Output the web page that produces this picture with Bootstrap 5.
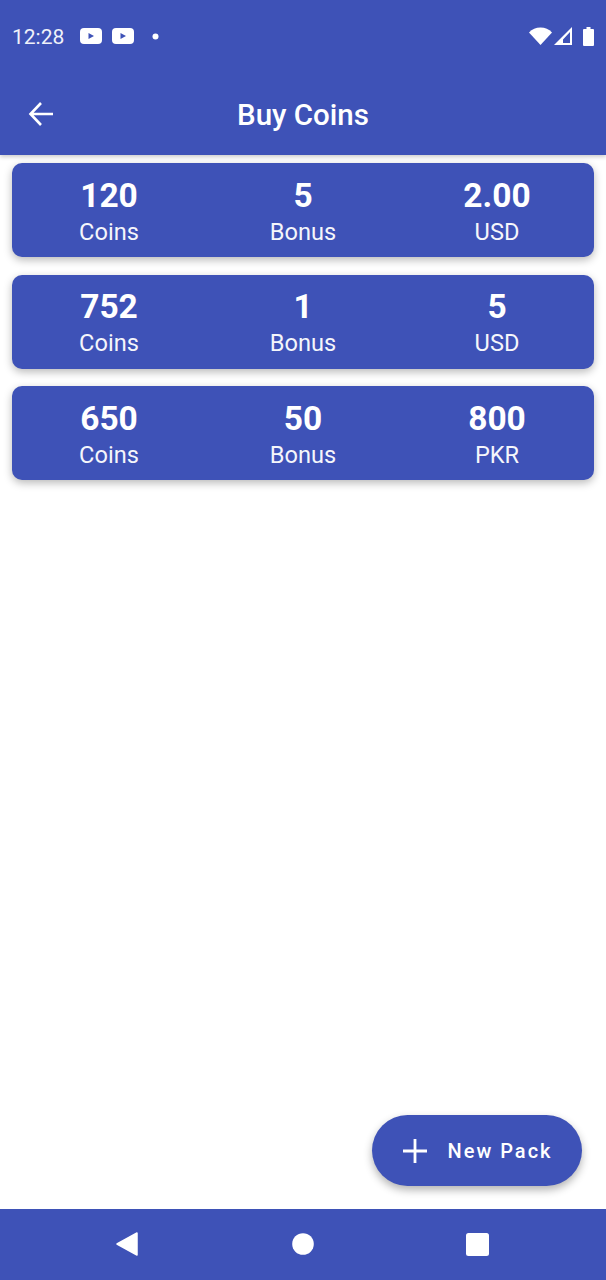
<!DOCTYPE html>
<html lang="en">
<head>
  <meta charset="UTF-8">
  <meta name="viewport" content="width=device-width, initial-scale=1.0">
  <title>Buy Coins</title>
  <link href="https://cdn.jsdelivr.net/npm/bootstrap@5.3.0/dist/css/bootstrap.min.css" rel="stylesheet">
  <script src="https://cdn.jsdelivr.net/npm/bootstrap@5.3.0/dist/js/bootstrap.bundle.min.js"></script>
  <style>
    body {
      background-color: #fff;
      font-family: Roboto, sans-serif;
      color: #fff;
    }
    .app-page {
      height: 1280px;
    }
    .app-bar {
      height: 155px;
      background-color: #3e52b7;
      box-shadow: 0 2px 4px rgba(0, 0, 0, 0.2);
    }
    .status-row {
      height: 72px;
      padding: 0 12px;
    }
    .status-time {
      font-size: 21px;
      width: 68px;
      opacity: 0.92;
      padding-top: 4px;
    }
    .yt-gap {
      margin-right: 10px;
    }
    .dot-gap {
      margin-left: 18px;
    }
    .signal-gap {
      margin-left: 2px;
      margin-right: 11px;
    }
    .tool-row {
      height: 83px;
      padding-top: 3px;
    }
    .back-btn {
      left: 28px;
      top: 29px;
    }
    .page-title {
      font-size: 29.5px;
      font-weight: 500;
    }
    .pack-list {
      padding: 8px 12px 0;
      gap: 17.5px;
    }
    .pack-card {
      height: 94px;
      padding-top: 2px;
      background-color: #3e52b7;
      border-radius: 10px;
      box-shadow: 0 3px 8px rgba(0, 0, 0, 0.28);
    }
    .pack-num {
      font-size: 33.5px;
      font-weight: 700;
      line-height: 42px;
    }
    .pack-label {
      font-size: 23.6px;
      font-weight: 400;
      line-height: 31px;
      opacity: 0.95;
    }
    .fab-row {
      padding-right: 24px;
      margin-bottom: 23px;
    }
    .new-pack {
      width: 210px;
      height: 71px;
      padding-left: 14px;
      border-radius: 36px;
      background-color: #3e52b7;
      box-shadow: 0 4px 8px rgba(0, 0, 0, 0.3);
      color: #fff;
      font-size: 20px;
      font-weight: 500;
      letter-spacing: 2px;
      gap: 20px;
    }
    .bottom-bar {
      height: 71px;
      background-color: #3e52b7;
      padding-bottom: 1px;
    }
    .nav-slot {
      width: 176px;
    }
    .nav-square {
      margin-right: 3px;
    }
  </style>
</head>
<body>
  <div class="app-page d-flex flex-column">
    <header class="app-bar">
      <div class="status-row d-flex align-items-center">
        <span class="status-time">12:28</span>
        <svg width="22" height="16" viewBox="0 0 22 16" class="yt-gap"><rect width="22" height="16" rx="4" fill="#fff"/><path d="M8.500 5l5.500 3-5.500 3z" fill="#3e52b7"/></svg>
        <svg width="22" height="16" viewBox="0 0 22 16"><rect width="22" height="16" rx="4" fill="#fff"/><path d="M8.500 5l5.500 3-5.500 3z" fill="#3e52b7"/></svg>
        <svg width="7" height="7" viewBox="0 0 7 7" class="dot-gap"><circle cx="3.500" cy="3.500" r="3" fill="#fff"/></svg>
        <span class="flex-grow-1"></span>
        <svg width="23" height="18" viewBox="0 0 23 18"><path d="M0 5.500C3 2 7 .5 11.500.5S20 2 23 5.500L11.500 18z" fill="#fff"/></svg>
        <svg width="18" height="18" viewBox="0 0 18 18" class="signal-gap"><path d="M18 0v18H0zM16 5v11H9v-3.500z" fill="#fff" fill-rule="evenodd"/></svg>
        <svg width="11" height="19" viewBox="0 0 11 19"><path d="M3.500 0h4v2h2.500a1 1 0 0 1 1 1v15a1 1 0 0 1-1 1H1a1 1 0 0 1-1-1V3a1 1 0 0 1 1-1h2.500z" fill="#fff"/></svg>
      </div>
      <div class="tool-row position-relative d-flex align-items-center justify-content-center">
        <svg class="back-btn position-absolute" width="26" height="26" viewBox="0 0 26 26"><path d="M13 2L2.500 13 13 24M2.500 13H25" fill="none" stroke="#fff" stroke-width="2.600"/></svg>
        <span class="page-title">Buy Coins</span>
      </div>
    </header>

    <main class="pack-list d-flex flex-column flex-grow-1">
      <div class="pack-card row g-0 align-items-center text-center">
        <div class="col-4"><div class="pack-num">120</div><div class="pack-label">Coins</div></div>
        <div class="col-4"><div class="pack-num">5</div><div class="pack-label">Bonus</div></div>
        <div class="col-4"><div class="pack-num">2.00</div><div class="pack-label">USD</div></div>
      </div>
      <div class="pack-card row g-0 align-items-center text-center">
        <div class="col-4"><div class="pack-num">752</div><div class="pack-label">Coins</div></div>
        <div class="col-4"><div class="pack-num">1</div><div class="pack-label">Bonus</div></div>
        <div class="col-4"><div class="pack-num">5</div><div class="pack-label">USD</div></div>
      </div>
      <div class="pack-card row g-0 align-items-center text-center">
        <div class="col-4"><div class="pack-num">650</div><div class="pack-label">Coins</div></div>
        <div class="col-4"><div class="pack-num">50</div><div class="pack-label">Bonus</div></div>
        <div class="col-4"><div class="pack-num">800</div><div class="pack-label">PKR</div></div>
      </div>
    </main>

    <div class="fab-row d-flex justify-content-end">
      <button type="button" class="new-pack btn d-flex align-items-center justify-content-center border-0">
        <svg width="24" height="24" viewBox="0 0 24 24"><path d="M12 0v24M0 12h24" fill="none" stroke="#fff" stroke-width="2.800"/></svg>
        New Pack
      </button>
    </div>

    <footer class="bottom-bar d-flex align-items-center justify-content-center">
      <div class="nav-slot d-flex justify-content-center">
        <svg width="22" height="24" viewBox="0 0 22 24"><path d="M21 1v22L1 12z" fill="#fff" stroke="#fff" stroke-width="1.500" stroke-linejoin="round"/></svg>
      </div>
      <div class="nav-slot d-flex justify-content-center">
        <svg width="22" height="22" viewBox="0 0 22 22"><circle cx="11" cy="11" r="10.800" fill="#fff"/></svg>
      </div>
      <div class="nav-slot d-flex justify-content-center">
        <svg width="23" height="23" viewBox="0 0 23 23" class="nav-square"><rect width="23" height="23" rx="2.500" fill="#fff"/></svg>
      </div>
    </footer>
  </div>
</body>
</html>
